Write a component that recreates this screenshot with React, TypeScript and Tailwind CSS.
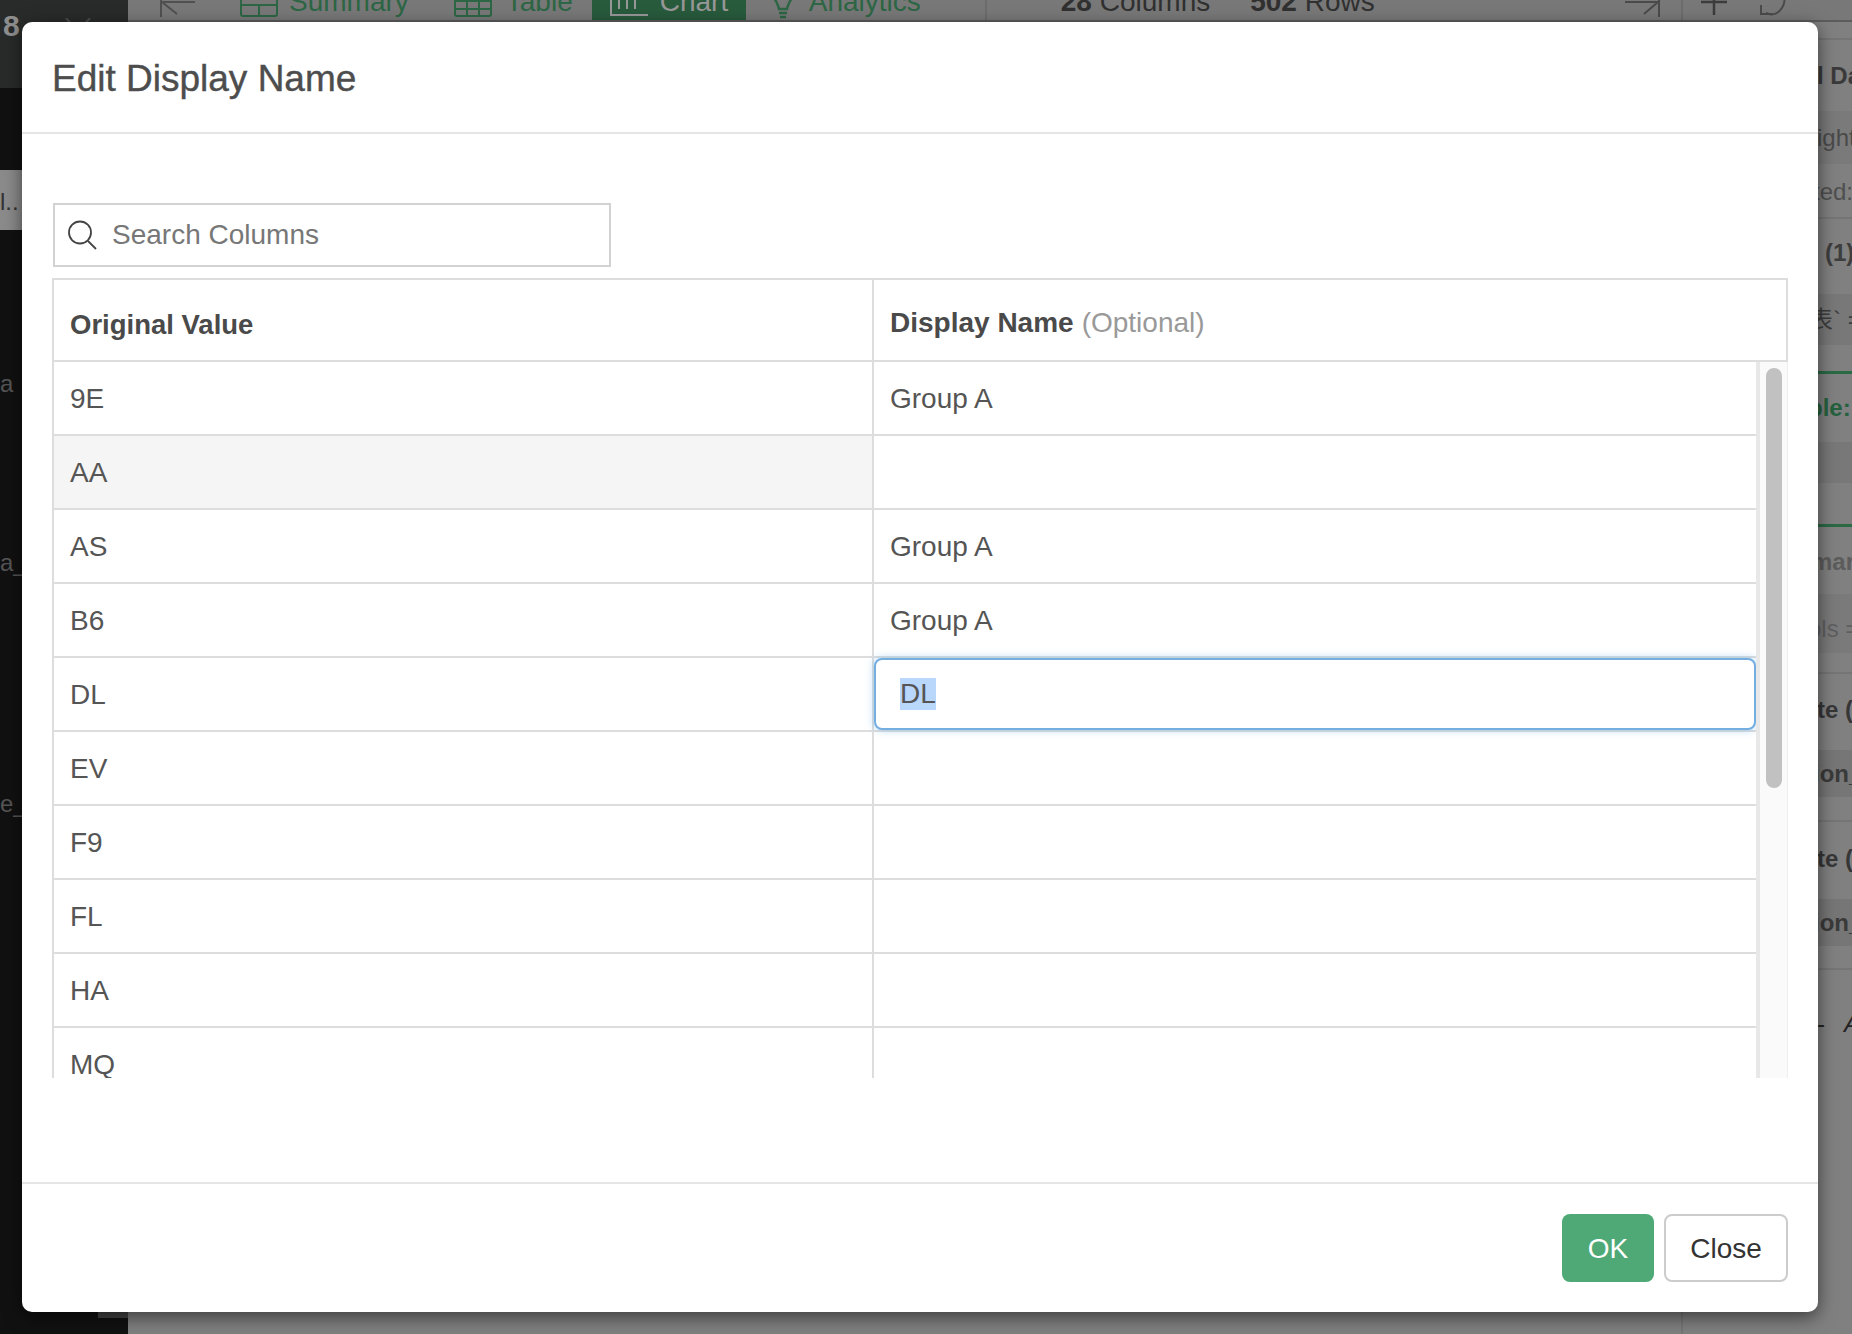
const FONT = "font-['Liberation_Sans','Noto_Sans_CJK_SC',sans-serif]";

const rows = [
  { name: '9E', display: 'Group A' },
  { name: 'AA', display: '', shaded: true },
  { name: 'AS', display: 'Group A' },
  { name: 'B6', display: 'Group A' },
  { name: 'DL', display: 'DL', editing: true },
  { name: 'EV', display: '' },
  { name: 'F9', display: '' },
  { name: 'FL', display: '' },
  { name: 'HA', display: '' },
  { name: 'MQ', display: '' },
];

function TopBar() {
  return (
    <div className="h-[22px] border-b-2 border-[#5c5c5c] bg-[#787878] overflow-hidden shrink-0">
      <div className="-mt-[19px] h-[42px] flex items-center text-[28px] leading-[42px] text-[#2c6644] whitespace-nowrap">
        <svg className="ml-[32px] w-[36px] h-[42px] shrink-0" viewBox="0 0 36 42" fill="none" stroke="#505050" strokeWidth="2">
          <path d="M1 5V36M35 21H2L17 33" />
        </svg>
        <svg className="ml-[44px] w-[38px] h-[42px] shrink-0" viewBox="0 0 38 42" fill="none" stroke="#2c6644" strokeWidth="2">
          <rect x="1" y="12" width="36" height="23" rx="2" />
          <path d="M1 24H37M19 24V35" />
        </svg>
        <span className="ml-[11px]">Summary</span>
        <svg className="ml-[45px] w-[38px] h-[42px] shrink-0" viewBox="0 0 38 42" fill="none" stroke="#2c6644" strokeWidth="2">
          <rect x="1" y="12" width="36" height="23" rx="2" />
          <path d="M1 20H37M1 28H37M13 12V35M25 12V35" />
        </svg>
        <span className="ml-[14px]">Table</span>
        <div className="ml-[19px] w-[154px] h-[42px] bg-[#285a3c] flex items-center text-[#979797]">
          <svg className="ml-[18px] w-[38px] h-[42px] shrink-0" viewBox="0 0 38 42" fill="none" stroke="#979797" strokeWidth="2">
            <path d="M1 10V34H38M9 18V28M17 14V28M25 18V28" />
          </svg>
          <span className="ml-[12px]">Chart</span>
        </div>
        <svg className="ml-[24px] w-[26px] h-[42px] shrink-0" viewBox="0 0 26 42" fill="none" stroke="#2c6644" strokeWidth="2.5">
          <path d="M1 10C4 18 8 22 9 28H17C18 22 22 18 25 10M9 32H17M10 36H16" />
        </svg>
        <span className="ml-[13px]">Analytics</span>
        <div className="ml-[64px] w-[2px] h-[42px] bg-[#6c6c6c] shrink-0" />
        <span className="ml-[74px] text-[#303030]">
          <b>28</b> Columns
        </span>
        <span className="ml-[40px] text-[#303030]">
          <b>502</b> Rows
        </span>
        <svg className="ml-[250px] w-[36px] h-[42px] shrink-0" viewBox="0 0 36 42" fill="none" stroke="#4a4a4a" strokeWidth="2">
          <path d="M34 5V36M0 21H33L19 33" />
        </svg>
        <div className="ml-[20px] w-[2px] h-[42px] bg-[#6c6c6c] shrink-0" />
        <svg className="ml-[18px] w-[26px] h-[42px] shrink-0" viewBox="0 0 26 42" fill="none" stroke="#3c3c3c" strokeWidth="2.5">
          <path d="M13 8V34M0 21H26" />
        </svg>
        <svg className="ml-[32px] w-[28px] h-[42px] shrink-0" viewBox="0 0 28 42" fill="none" stroke="#4a4a4a" strokeWidth="2">
          <path d="M25 12C28 26 18 37 7 32M2 24V33H13" />
        </svg>
      </div>
    </div>
  );
}

function Sidebar() {
  return (
    <div className="w-[128px] h-full shrink-0 bg-[#111111] flex flex-col text-[#555555] text-[24px] leading-[28px]">
      <div className="h-[88px] shrink-0 bg-[#292b2b] flex items-start">
        <span className="mt-[10px] ml-[3px] font-bold text-[#8e8e8e] text-[30px] leading-[32px]">8</span>
        <svg className="ml-[45px] mt-[18px] w-[26px] h-[18px]" viewBox="0 0 26 18" fill="none" stroke="#4c4c4c" strokeWidth="2">
          <path d="M1 0L13 14L25 0" />
        </svg>
      </div>
      <div className="h-[82px] shrink-0" />
      <div className="h-[60px] shrink-0 bg-[#8b8b8b] text-[#333333] flex items-center overflow-hidden pt-[4px]">
        <span>l..</span>
      </div>
      <div className="h-[140px] shrink-0" />
      <div className="h-[28px] shrink-0 overflow-hidden">a</div>
      <div className="h-[151px] shrink-0" />
      <div className="h-[28px] shrink-0 overflow-hidden">a_</div>
      <div className="h-[213px] shrink-0" />
      <div className="h-[28px] shrink-0 overflow-hidden">e_</div>
      <div className="h-[494px] shrink-0" />
      <div className="h-[6px] w-[30px] self-end shrink-0 bg-[#444444]" />
    </div>
  );
}

function StripRow({ h, children, className = '' }: { h: string; children?: React.ReactNode; className?: string }) {
  return (
    <div className={`${h} shrink-0 flex items-center whitespace-nowrap overflow-hidden ${className}`}>
      {children}
    </div>
  );
}

function RightPanel() {
  return (
    <div className="w-[171px] border-l-2 border-[#757575] pl-[134px] flex flex-col text-[24px] leading-[30px] text-[#3a3a3a]">
      <StripRow h="h-[18px]" className="border-b-2 border-[#757575]" />
      <StripRow h="h-[71px]" className="font-bold">l Da</StripRow>
      <StripRow h="h-[53px]" className="bg-[#7a7a7a] text-[#4a4a4a]">ight</StripRow>
      <StripRow h="h-[55px]" className="border-b-2 border-[#757575] text-[#4f4f4f] pt-[3px]"><span className="-ml-[4px]">ted:</span></StripRow>
      <StripRow h="h-[75px]" className="font-bold text-[#3d3d3d] pb-[7px]"><span className="ml-[8px]">(1)</span></StripRow>
      <StripRow h="h-[51px]" className="bg-[#787878] text-[#3d3d3d]"><span className="-ml-[8px]">表` =</span></StripRow>
      <StripRow h="h-[26px]" />
      <StripRow h="h-[71px]" className="border-t-[3px] border-[#2a6a45] font-bold text-[#25613e]"><span className="-ml-[9px]">ble:</span></StripRow>
      <StripRow h="h-[41px]" className="bg-[#787878]" />
      <StripRow h="h-[41px]" />
      <StripRow h="h-[70px]" className="border-t-[3px] border-[#2a6a45] font-bold text-[#5c5c5c] pt-[2px]"><span className="-ml-[6px]">mar</span></StripRow>
      <StripRow h="h-[59px]" className="bg-[#7a7a7a] text-[#5f5f5f] pt-[11px]"><span className="-ml-[9px]">ols =</span></StripRow>
      <StripRow h="h-[21px]" className="border-b-2 border-[#757575]" />
      <StripRow h="h-[76px]" className="font-bold text-[#363636] pb-[4px]">te (</StripRow>
      <StripRow h="h-[47px]" className="bg-[#767676] font-bold text-[#3a3a3a]"><span className="-ml-[4px]">ion_</span></StripRow>
      <StripRow h="h-[25px]" className="border-b-2 border-[#757575]" />
      <StripRow h="h-[77px]" className="font-bold text-[#363636] pb-[4px]">te (</StripRow>
      <StripRow h="h-[47px]" className="bg-[#767676] font-bold text-[#3a3a3a]"><span className="-ml-[4px]">ion_</span></StripRow>
      <StripRow h="h-[24px]" className="border-b-2 border-[#757575]" />
      <StripRow h="h-[108px]" className="text-[#222222]">
        <span>-</span>
        <span className="ml-[19px] italic">A</span>
      </StripRow>
    </div>
  );
}

function TableRow({ row }: { row: (typeof rows)[number] }) {
  return (
    <div className="h-[74px] shrink-0 flex border-b-2 border-[#dddddd] text-[#555555]">
      <div className={`w-[820px] shrink-0 pl-[16px] pt-[2px] flex items-center border-r-2 border-[#dddddd] ${row.shaded ? 'bg-[#f5f5f5]' : ''}`}>
        {row.name}
      </div>
      {row.editing ? (
        <div className="flex-1 h-[72px]">
          <div className="h-full rounded-[8px] border-2 border-[#74ade0] shadow-[0_0_8px_rgba(102,175,233,0.5)] bg-white pl-[24px] flex items-center">
            <span className="bg-[#b9d6fb] h-[32px] flex items-center">{row.display}</span>
          </div>
        </div>
      ) : (
        <div className="flex-1 pl-[16px] pt-[2px] flex items-center">{row.display}</div>
      )}
    </div>
  );
}

function Modal() {
  return (
    <div className="absolute left-[22px] top-[22px] w-[1796px] h-[1290px] bg-white rounded-[10px] shadow-[0_5px_18px_rgba(0,0,0,0.55)] flex flex-col text-[28px] leading-[32px]">
      <div className="h-[112px] shrink-0 border-b-2 border-[#e5e5e5] pl-[30px] pt-[3px] flex items-center text-[37px] leading-[44px] text-[#4d4d4d] [-webkit-text-stroke:0.4px_#4d4d4d]">
        Edit Display Name
      </div>
      <div className="flex-1 px-[30px] pt-[69px] flex flex-col min-h-0">
        <div className="ml-[1px] w-[558px] h-[64px] shrink-0 border-2 border-[#d2d2d2] flex items-center text-[#777777]">
          <svg className="ml-[12px] w-[30px] h-[30px] shrink-0" viewBox="0 0 30 30" fill="none" stroke="#444444" strokeWidth="1.8">
            <circle cx="13" cy="12.5" r="11" />
            <path d="M21 21L29 29" />
          </svg>
          <span className="ml-[15px]">Search Columns</span>
        </div>
        <div className="mt-[11px] h-[800px] shrink-0 flex flex-col">
          <div className="h-[84px] shrink-0 border-2 border-[#dddddd] flex text-[#4a4a4a]">
            <div className="w-[820px] shrink-0 border-r-2 border-[#dddddd] pl-[16px] pt-[10px] flex items-center font-bold text-[27.5px]">
              Original Value
            </div>
            <div className="flex-1 pl-[16px] pt-[6px] flex items-center">
              <b>Display Name</b>
              <span className="ml-[8px] text-[#999999]">(Optional)</span>
            </div>
          </div>
          <div className="h-[716px] shrink-0 flex overflow-hidden">
            <div className="w-[1704px] shrink-0 border-l-2 border-[#dddddd] flex flex-col overflow-hidden">
              {rows.map((row) => (
                <TableRow key={row.name} row={row} />
              ))}
            </div>
            <div className="flex-1 bg-[#fafafa] border-l-4 border-r border-l-[#e8e8e8] border-r-[#eeeeee] pl-[6px] pt-[6px]">
              <div className="w-[16px] h-[420px] rounded-full bg-[#c1c1c1]" />
            </div>
          </div>
        </div>
      </div>
      <div className="h-[130px] shrink-0 border-t-2 border-[#e5e5e5] pr-[30px] flex items-center justify-end gap-[10px]">
        <button className="w-[92px] h-[68px] pt-[2px] rounded-[8px] bg-[#4fa977] text-white">OK</button>
        <button className="w-[124px] h-[68px] pt-[2px] rounded-[8px] border-2 border-[#cccccc] text-[#333333] bg-white">Close</button>
      </div>
    </div>
  );
}

export default function App() {
  return (
    <div className={`relative w-[1852px] h-[1334px] overflow-hidden bg-[#808080] flex ${FONT}`}>
      <Sidebar />
      <div className="flex-1 flex flex-col min-w-0">
        <TopBar />
        <div className="flex-1 flex justify-end min-h-0">
          <RightPanel />
        </div>
      </div>
      <Modal />
    </div>
  );
}
